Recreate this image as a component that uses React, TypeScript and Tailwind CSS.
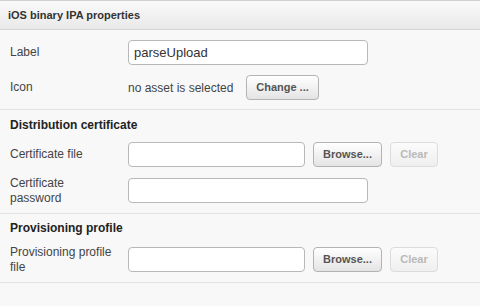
import React from "react";

const font = { fontFamily: '"Liberation Sans", Arial, Helvetica, sans-serif' };

function Btn({ children, disabled = false, w }: { children: React.ReactNode; disabled?: boolean; w: string }) {
  return (
    <button
      type="button"
      className={
        disabled
          ? `${w} h-[25px] rounded-[4px] border border-[#dcdcdc] bg-gradient-to-b from-[#fbfbfb] to-[#efefef] text-[11px] font-bold text-[#b9b9b9] shrink-0`
          : `${w} h-[25px] rounded-[4px] border border-[#b3b3b3] bg-gradient-to-b from-[#ffffff] to-[#e4e4e4] text-[11px] font-bold text-[#555] shrink-0`
      }
    >
      {children}
    </button>
  );
}

function Input({ w, value = "" }: { w: string; value?: string }) {
  return (
    <div className={`${w} h-[25px] rounded-[4px] border border-[#b8b8b8] bg-white pl-[5px] flex items-center text-[13px] text-[#333] shrink-0`}>
      {value}
    </div>
  );
}

function Label({ children }: { children: React.ReactNode }) {
  return <div className="w-[106px] mr-[12px] shrink-0 text-[12px] leading-[15px] text-[#444]">{children}</div>;
}

export default function App() {
  return (
    <div style={font} className="w-[480px] h-[306px] bg-[#f8f8f8] overflow-hidden">
      <div className="h-[30px] border-t border-b border-t-[#cfcfcf] border-b-[#d3d3d3] bg-gradient-to-b from-[#fafafa] to-[#e9e9e9] flex items-center pl-[8px] text-[11px] font-bold text-[#333]">
        iOS binary IPA properties
      </div>

      <div className="border-b border-[#e2e2e2] pl-[10px] pt-[10px] pb-[9px]">
        <div className="flex items-center h-[25px]">
          <Label>Label</Label>
          <Input w="w-[240px]" value="parseUpload" />
        </div>
        <div className="flex items-center h-[25px] mt-[10px]">
          <Label>Icon</Label>
          <div className="text-[12px] text-[#444] w-[118px] shrink-0">no asset is selected</div>
          <Btn w="w-[73px]">Change ...</Btn>
        </div>
      </div>

      <div className="border-b border-[#e2e2e2] pl-[10px] pt-[7px] pb-[10px]">
        <div className="h-[16px] leading-[16px] text-[12px] font-bold text-[#222]">Distribution certificate</div>
        <div className="flex items-center h-[25px] mt-[9px]">
          <Label>Certificate file</Label>
          <Input w="w-[177px]" />
          <div className="w-[8px] shrink-0" />
          <Btn w="w-[69px]">Browse...</Btn>
          <div className="w-[8px] shrink-0" />
          <Btn w="w-[48px]" disabled>
            Clear
          </Btn>
        </div>
        <div className="flex items-center h-[25px] mt-[11px]">
          <Label>
            Certificate
            <br />
            password
          </Label>
          <Input w="w-[240px]" />
        </div>
      </div>

      <div className="border-b border-[#e2e2e2] pl-[10px] pt-[6px] pb-[10px]">
        <div className="h-[16px] leading-[16px] text-[12px] font-bold text-[#222]">Provisioning profile</div>
        <div className="flex items-center h-[25px] mt-[11px]">
          <Label>
            Provisioning profile
            <br />
            file
          </Label>
          <Input w="w-[177px]" />
          <div className="w-[8px] shrink-0" />
          <Btn w="w-[69px]">Browse...</Btn>
          <div className="w-[8px] shrink-0" />
          <Btn w="w-[48px]" disabled>
            Clear
          </Btn>
        </div>
      </div>
    </div>
  );
}
